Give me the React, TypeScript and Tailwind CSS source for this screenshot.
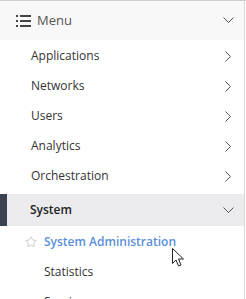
import { Star } from "lucide-react";

const items = ["Applications", "Networks", "Users", "Analytics", "Orchestration"];
const subItems = ["Statistics", "Sessions"];

function ListIcon() {
  return (
    <svg width="15" height="12" viewBox="0 0 15 12" fill="#444">
      <rect x="0" y="0" width="2" height="2" />
      <rect x="4" y="0" width="11" height="2" />
      <rect x="0" y="5" width="2" height="2" />
      <rect x="4" y="5" width="11" height="2" />
      <rect x="0" y="10" width="2" height="2" />
      <rect x="4" y="10" width="11" height="2" />
    </svg>
  );
}

function Down() {
  return (
    <svg width="11" height="7" viewBox="0 0 11 7" fill="none" stroke="#555" strokeWidth="1">
      <polyline points="0.5,0.5 5.5,5.5 10.5,0.5" />
    </svg>
  );
}

function Right() {
  return (
    <svg width="7" height="11" viewBox="0 0 7 11" fill="none" stroke="#555" strokeWidth="1">
      <polyline points="0.5,0.5 5.5,5.5 0.5,10.5" />
    </svg>
  );
}

function Cursor() {
  return (
    <svg width="13" height="19" viewBox="0 0 13 19" className="absolute left-[172px] top-[247px]">
      <path d="M0.5 0.5 L0.5 15.5 L4 12 L6.5 18 L9 17 L6.5 11 L11.5 11 Z" fill="#fff" stroke="#222" strokeWidth="1" />
    </svg>
  );
}

export default function App() {
  return (
    <div
      className="relative w-[246px] h-[299px] overflow-hidden bg-white border-t border-[#cfcfcf] text-[12px] text-[#333]"
      style={{ fontFamily: "'Open Sans', 'Noto Sans', sans-serif" }}
    >
      <div className="h-full border-r border-[#d9d9d9] mr-[1px]">
        {/* Header */}
        <div className="flex items-center justify-between h-[39px] bg-[#f8f8f8] pl-[16px] pr-[10px]">
          <div className="flex items-center gap-[6px]">
            <ListIcon />
            <span className="text-[#555] text-[13px]">Menu</span>
          </div>
          <Down />
        </div>

        {/* Items */}
        <div className="pt-[1px]">
          {items.map((label) => (
            <div key={label} className="flex items-center justify-between h-[30px] pl-[31px] pr-[12px]">
              <span>{label}</span>
              <Right />
            </div>
          ))}
        </div>

        {/* Active group */}
        <div className="flex items-center justify-between h-[32px] bg-[#ebebed] pr-[10px] mt-[3px]">
          <div className="flex items-center h-full">
            <div className="w-[7px] h-full bg-[#3a4150]" />
            <span className="ml-[23px] font-semibold text-[#222]">System</span>
          </div>
          <Down />
        </div>

        <div className="pt-[1px]">
          <div className="flex items-center h-[30px] pl-[25px]">
            <Star className="w-[12px] h-[12px] text-[#bbb]" strokeWidth={1.5} />
            <span className="ml-[7px] font-semibold text-[#5a8fd8]">System Administration</span>
          </div>
          {subItems.map((label) => (
            <div key={label} className="flex items-center h-[30px] pl-[44px]">
              <span>{label}</span>
            </div>
          ))}
        </div>
      </div>
      <Cursor />
    </div>
  );
}
